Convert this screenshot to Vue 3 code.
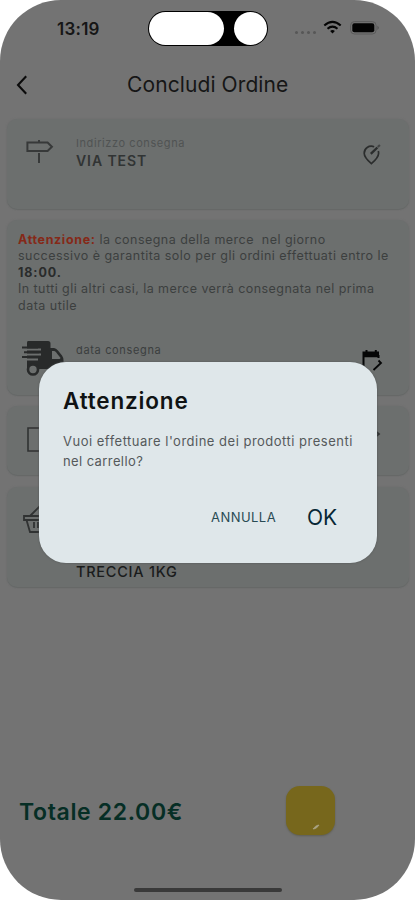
<script setup>
const total = '22.00€'
</script>

<template>
  <div class="phone">
    <header class="status">
      <span class="time">13:19</span>
      <div class="island"><i class="pill"></i><i class="lens"></i></div>
      <div class="signals">
        <span class="dots"><i v-for="n in 4" :key="n"></i></span>
        <svg class="wifi" viewBox="0 0 18 13" fill="none" stroke="#050505" stroke-width="2.1">
          <path d="M.8 4.5Q9-2.8 17.2 4.5M4 7.8q5-4.3 10 0" />
          <path d="M6.6 10q2.4-1.9 4.8 0L9 12.5Z" fill="#050505" stroke="none" />
        </svg>
        <svg class="battery" viewBox="0 0 30 14">
          <rect x=".6" y=".6" width="25.5" height="12.4" rx="3.8" fill="none" stroke="#5b5b5b" />
          <rect x="2.3" y="2.3" width="22" height="9" rx="2.1" fill="#030303" />
          <path d="M27.4 4.7q3 2 0 4.2Z" fill="#555" />
        </svg>
      </div>
    </header>

    <nav class="nav">
      <svg class="back" viewBox="0 0 12 20" fill="none" stroke="#0b0b0b" stroke-width="2.1"><path d="M10.2 1.2 2 10l8.2 8.8" /></svg>
      <h1>Concludi Ordine</h1>
    </nav>

    <main>
      <section class="card address">
        <svg class="sign" viewBox="0 0 28 26" fill="none" stroke="#373939" stroke-width="2">
          <path d="M1.4 3.5h20.2l4.3 4.2-4.3 4.2H1.4ZM13 1v2M13 14v10" />
        </svg>
        <div class="details">
          <small>Indirizzo consegna</small>
          <strong>VIA TEST</strong>
        </div>
        <svg class="pin" viewBox="0 0 18 22" fill="none" stroke="#2b2d2d" stroke-width="1.7">
          <path d="M11.2 2.7C5.8.8 1.2 4.400 1.200 9.200c0 4 3.200 7 7.200 10.400 4-3.400 7.200-6.400 7.200-10.400 0-.9-.1-1.600-.3-2.300" />
          <path d="m7.800 9.800 6.600-6.300" stroke-width="2.400" />
          <path d="m14.800 3 2.100-2" stroke-width="2.200" stroke="#424444" />
        </svg>
      </section>

      <section class="card delivery">
        <p class="notice">
          <span class="l1"><b class="red">Attenzione:</b> la consegna della merce&nbsp; nel giorno</span>
          <span class="l2">successivo è garantita solo per gli ordini effettuati entro le</span>
          <span class="l3"><b>18:00.</b></span>
          <span class="l4">In tutti gli altri casi, la merce verrà consegnata nel prima</span>
          <span class="l5">data utile</span>
        </p>
        <div class="date-row">
          <svg class="truck" viewBox="0 0 42 36">
            <path fill="#282a2a" d="M6 0h20q2.500 0 2.500 2.500V7h3.500q2 0 4 2.500l4 5q1.500 2 1.500 5V28H5V2q0-2 1-2Z" />
            <path d="M4 8.500h15M4 13.500h15M4 18.500h12" stroke="#6c6f6e" stroke-width="1.800" />
            <path fill="#6c6f6e" d="M0 9h5v10H0Z" />
            <path d="M0 6.500h16M2 11.200h15M0 16h15" stroke="#282a2a" stroke-width="2" />
            <path fill="#6c6f6e" d="M30 10h2q1 0 2 1.200l4 5q1 1.500-.5 1.800H30Z" />
            <circle cx="11" cy="28.500" r="5" fill="#6c6f6e" stroke="#282a2a" stroke-width="2.600" />
          </svg>
          <span>data consegna</span>
          <svg class="calendar" viewBox="0 0 20 24" fill="none" stroke="#050606" stroke-width="2">
            <path d="M1.500 22V2.500h14.500v3.700H1.500M1 4.500h15.500M4.500 0v3M13.800 0v3M16.500 5v3" />
            <path d="M16.500 10.500 19 13l-7.500 7" stroke-width="1.800" />
          </svg>
        </div>
      </section>

      <section class="card note">
        <svg class="box" viewBox="0 0 25 25" fill="none" stroke="#303232" stroke-width="1.6"><path d="M1 1h23v23H1Z" /></svg>
        <svg class="chevron" viewBox="0 0 8 10" fill="none" stroke="#303232" stroke-width="1.7"><path d="m1 1 5 4-5 4" /></svg>
      </section>

      <section class="card cart">
        <svg class="basket" viewBox="0 0 34 30" fill="none" stroke="#303232" stroke-width="1.8">
          <path d="M1 11h32v4H1ZM3.500 15l3.500 12h20l3.500-12M7 11 17 1l10 10M11 17v6M15 17v6M20 17v6" />
        </svg>
        <span>TRECCIA 1KG</span>
      </section>
    </main>

    <footer class="summary">
      <span>Totale {{ total }}</span>
      <button aria-label="Conferma">
        <svg viewBox="0 0 8 6"><path d="M1 5C3.5 5 6 3 7 1 4 1.3 2.5 3.2 1 5Z" fill="#aaa486" stroke="#aaa486" stroke-width=".7" /></svg>
      </button>
    </footer>
    <div class="home"></div>

    <div class="dialog" role="dialog">
      <h2>Attenzione</h2>
      <p><span class="q1">Vuoi effettuare l'ordine dei prodotti presenti</span><span class="q2">nel carrello?</span></p>
      <div class="actions"><button class="cancel">ANNULLA</button><button class="ok">OK</button></div>
    </div>
  </div>
</template>

<style>
body { background: #fff; overflow: hidden; }
</style>

<style scoped>
* { box-sizing: border-box; }
.phone { position: relative; width: 415px; height: 900px; display: flex; flex-direction: column; overflow: hidden; background: #737373; border-radius: 61px; font-family: Inter, sans-serif; white-space: nowrap; }
h1, h2, p { margin: 0; }
svg { display: block; flex: none; overflow: visible; }
button { border: 0; padding: 0; background: none; font-family: inherit; }
.status { height: 58px; flex: none; display: flex; padding-left: 57px; }
.time { width: 91px; padding-top: 18px; font-size: 17px; line-height: 22px; font-weight: 600; color: #161616; letter-spacing: .25px; }
.island { width: 120px; height: 35px; margin-top: 11px; border-radius: 18px; background: #000; padding: 1px; display: flex; justify-content: space-between; }
.pill { width: 75px; height: 33px; border-radius: 17px; background: #fff; }
.lens { width: 33px; height: 33px; border-radius: 50%; background: #fff; }
.signals { display: flex; align-items: flex-start; padding: 21px 0 0 27px; }
.dots { display: flex; gap: 3px; padding-top: 10px; width: 28px; }
.dots i { width: 3px; height: 3px; border-radius: 50%; background: #575757; }
.wifi { width: 19px; height: 13px; }
.battery { width: 30px; height: 14px; margin-left: 8px; }
.nav { height: 61px; flex: none; display: flex; align-items: flex-start; padding: 16px 0 0 16px; }
.back { width: 12px; height: 20px; margin-top: 1px; }
.nav h1 { margin-left: 99px; font-size: 21px; line-height: 22px; font-weight: 400; letter-spacing: .1px; color: #161616; }
main { padding: 0 6px 0 7px; display: flex; flex-direction: column; gap: 11px; }
.card { background: #6c6f6e; border-radius: 10px; box-shadow: 0 1px 1px #656867, 0 0 2px #6c6d6d; }
.address { height: 90px; display: flex; align-items: flex-start; padding-left: 19px; }
.sign { width: 28px; height: 26px; margin-top: 20px; }
.details { width: 286px; margin-left: 22px; padding-top: 17px; display: flex; flex-direction: column; }
.details small { font-size: 11px; line-height: 14px; letter-spacing: .58px; color: #505353; }
.details strong { margin-top: 2px; font-size: 14px; line-height: 18px; font-weight: 600; letter-spacing: .92px; color: #313434; }
.pin { width: 18px; height: 22px; margin: 25px 0 0 1px; }
.delivery { height: 175px; padding: 12px 11px 0; }
.notice { display: flex; flex-direction: column; font-size: 12.5px; line-height: 16.4px; color: #3c3f3f; }
.l1 { letter-spacing: .46px; }
.l2 { letter-spacing: .47px; }
.l3 { letter-spacing: .9px; }
.l4 { letter-spacing: .44px; }
.l5 { letter-spacing: .49px; }
.notice b { font-weight: 700; color: #292b2b; }
.notice .red { color: #852918; letter-spacing: .65px; }
.date-row { display: flex; padding: 26px 0 0 4px; font-size: 11px; line-height: 14px; color: #3b3e3e; letter-spacing: .66px; }
.truck { width: 42px; height: 36px; margin-top: 1px; }
.date-row span { width: 286px; margin: 3px 0 0 12px; }
.calendar { width: 20px; height: 24px; margin-top: 10px; }
.note { height: 69px; display: flex; padding-left: 20px; }
.box { width: 25px; height: 25px; margin-top: 21px; }
.chevron { width: 8px; height: 10px; margin: 23px 0 0 321px; }
.cart { height: 100px; margin-top: 1px; display: flex; padding-left: 16px; }
.basket { width: 34px; height: 30px; margin-top: 18px; }
.cart span { margin: 76px 0 0 19px; font-size: 14.5px; line-height: 18px; font-weight: 500; letter-spacing: .75px; color: #1a1c1c; }
.summary { margin-top: auto; height: 102px; flex: none; display: flex; align-items: flex-start; padding-left: 19px; color: #062e25; }
.summary > span { width: 267px; padding-top: 12px; font-size: 23px; line-height: 28px; font-weight: 600; letter-spacing: .65px; }
.summary button { width: 49px; height: 49px; border-radius: 14px; background: #77671c; box-shadow: 0 1px 2px #5e5e54; padding: 32px 0 0 26px; }
.summary button svg { width: 8px; height: 6px; }
.home { align-self: center; width: 148px; height: 4px; border-radius: 3px; background: #393939; margin-bottom: 8px; }
.dialog { position: absolute; left: 39px; top: 362px; width: 338px; height: 201px; border-radius: 27px; background: #dfe7ea; box-shadow: 0 0 2px #4e5252; padding: 25px 24px 0; color: #101314; }
.dialog h2 { font-size: 22.5px; line-height: 28px; font-weight: 600; letter-spacing: .83px; }
.dialog p { margin-top: 17px; display: flex; flex-direction: column; font-size: 13px; line-height: 19.5px; color: #55595b; }
.q1 { letter-spacing: .5px; }
.q2 { letter-spacing: .4px; }
.actions { display: flex; align-items: center; height: 30px; margin-top: 31px; padding-left: 148px; }
.cancel { width: 96px; text-align: left; font-size: 13px; letter-spacing: .45px; color: #294b54; }
.ok { font-size: 21px; color: #072735; }
</style>
